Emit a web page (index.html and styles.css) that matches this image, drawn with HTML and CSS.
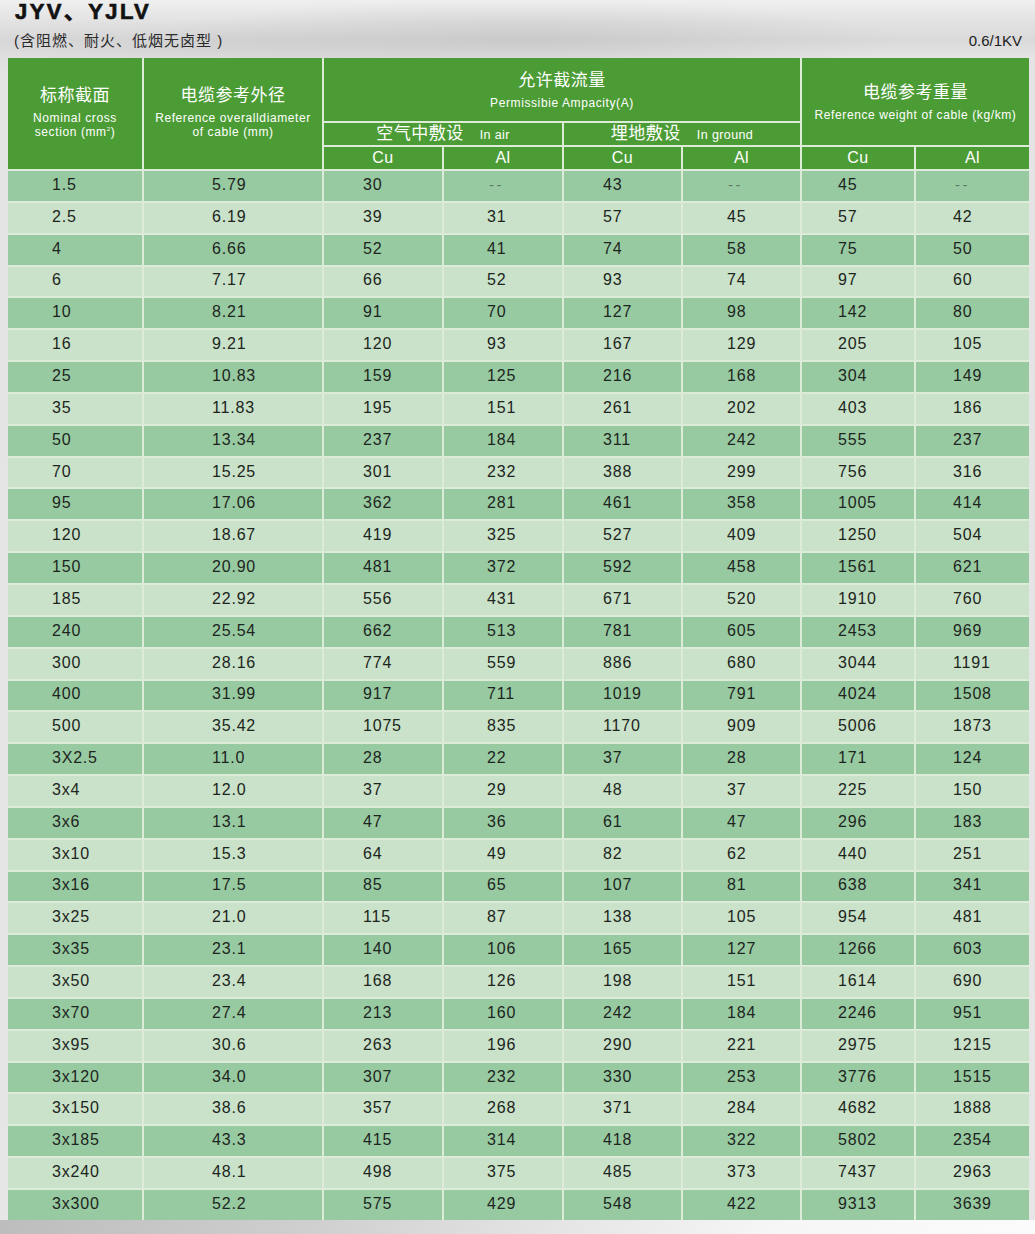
FILE: index.html
```html
<!DOCTYPE html>
<html lang="zh">
<head>
<meta charset="utf-8">
<title>JYV、YJLV</title>
<link rel="stylesheet" href="styles.css">
</head>
<body>
<div class="page">
  <h1 class="title">JYV、YJLV</h1>
  <div class="subline">
    <span class="subtitle">(含阻燃、耐火、低烟无卤型 )</span>
    <span class="volt">0.6/1KV</span>
  </div>
  <div class="grid">
    <div class="h h-sec"><div class="zh">标称截面</div><div class="en">Nominal cross<br>section (mm<sup>2</sup>)</div></div>
    <div class="h h-dia"><div class="zh">电缆参考外径</div><div class="en">Reference overalldiameter<br>of cable (mm)</div></div>
    <div class="h h-amp"><div class="zh">允许截流量</div><div class="en">Permissibie Ampacity(A)</div></div>
    <div class="h h-wt"><div class="zh">电缆参考重量</div><div class="en">Reference weight of cable (kg/km)</div></div>
    <div class="h h-air"><span class="zh">空气中敷设</span><span class="en-s">In air</span></div>
    <div class="h h-gnd"><span class="zh">埋地敷设</span><span class="en-s">In ground</span></div>
    <div class="h h-m c3">Cu</div>
    <div class="h h-m c4">Al</div>
    <div class="h h-m c5">Cu</div>
    <div class="h h-m c6">Al</div>
    <div class="h h-m c7">Cu</div>
    <div class="h h-m c8">Al</div>

    <div class="row dk"><div>1.5</div><div>5.79</div><div>30</div><div class="na">--</div><div>43</div><div class="na">--</div><div>45</div><div class="na">--</div></div>
    <div class="row lt"><div>2.5</div><div>6.19</div><div>39</div><div>31</div><div>57</div><div>45</div><div>57</div><div>42</div></div>
    <div class="row dk"><div>4</div><div>6.66</div><div>52</div><div>41</div><div>74</div><div>58</div><div>75</div><div>50</div></div>
    <div class="row lt"><div>6</div><div>7.17</div><div>66</div><div>52</div><div>93</div><div>74</div><div>97</div><div>60</div></div>
    <div class="row dk"><div>10</div><div>8.21</div><div>91</div><div>70</div><div>127</div><div>98</div><div>142</div><div>80</div></div>
    <div class="row lt"><div>16</div><div>9.21</div><div>120</div><div>93</div><div>167</div><div>129</div><div>205</div><div>105</div></div>
    <div class="row dk"><div>25</div><div>10.83</div><div>159</div><div>125</div><div>216</div><div>168</div><div>304</div><div>149</div></div>
    <div class="row lt"><div>35</div><div>11.83</div><div>195</div><div>151</div><div>261</div><div>202</div><div>403</div><div>186</div></div>
    <div class="row dk"><div>50</div><div>13.34</div><div>237</div><div>184</div><div>311</div><div>242</div><div>555</div><div>237</div></div>
    <div class="row lt"><div>70</div><div>15.25</div><div>301</div><div>232</div><div>388</div><div>299</div><div>756</div><div>316</div></div>
    <div class="row dk"><div>95</div><div>17.06</div><div>362</div><div>281</div><div>461</div><div>358</div><div>1005</div><div>414</div></div>
    <div class="row lt"><div>120</div><div>18.67</div><div>419</div><div>325</div><div>527</div><div>409</div><div>1250</div><div>504</div></div>
    <div class="row dk"><div>150</div><div>20.90</div><div>481</div><div>372</div><div>592</div><div>458</div><div>1561</div><div>621</div></div>
    <div class="row lt"><div>185</div><div>22.92</div><div>556</div><div>431</div><div>671</div><div>520</div><div>1910</div><div>760</div></div>
    <div class="row dk"><div>240</div><div>25.54</div><div>662</div><div>513</div><div>781</div><div>605</div><div>2453</div><div>969</div></div>
    <div class="row lt"><div>300</div><div>28.16</div><div>774</div><div>559</div><div>886</div><div>680</div><div>3044</div><div>1191</div></div>
    <div class="row dk"><div>400</div><div>31.99</div><div>917</div><div>711</div><div>1019</div><div>791</div><div>4024</div><div>1508</div></div>
    <div class="row lt"><div>500</div><div>35.42</div><div>1075</div><div>835</div><div>1170</div><div>909</div><div>5006</div><div>1873</div></div>
    <div class="row dk"><div>3X2.5</div><div>11.0</div><div>28</div><div>22</div><div>37</div><div>28</div><div>171</div><div>124</div></div>
    <div class="row lt"><div>3x4</div><div>12.0</div><div>37</div><div>29</div><div>48</div><div>37</div><div>225</div><div>150</div></div>
    <div class="row dk"><div>3x6</div><div>13.1</div><div>47</div><div>36</div><div>61</div><div>47</div><div>296</div><div>183</div></div>
    <div class="row lt"><div>3x10</div><div>15.3</div><div>64</div><div>49</div><div>82</div><div>62</div><div>440</div><div>251</div></div>
    <div class="row dk"><div>3x16</div><div>17.5</div><div>85</div><div>65</div><div>107</div><div>81</div><div>638</div><div>341</div></div>
    <div class="row lt"><div>3x25</div><div>21.0</div><div>115</div><div>87</div><div>138</div><div>105</div><div>954</div><div>481</div></div>
    <div class="row dk"><div>3x35</div><div>23.1</div><div>140</div><div>106</div><div>165</div><div>127</div><div>1266</div><div>603</div></div>
    <div class="row lt"><div>3x50</div><div>23.4</div><div>168</div><div>126</div><div>198</div><div>151</div><div>1614</div><div>690</div></div>
    <div class="row dk"><div>3x70</div><div>27.4</div><div>213</div><div>160</div><div>242</div><div>184</div><div>2246</div><div>951</div></div>
    <div class="row lt"><div>3x95</div><div>30.6</div><div>263</div><div>196</div><div>290</div><div>221</div><div>2975</div><div>1215</div></div>
    <div class="row dk"><div>3x120</div><div>34.0</div><div>307</div><div>232</div><div>330</div><div>253</div><div>3776</div><div>1515</div></div>
    <div class="row lt"><div>3x150</div><div>38.6</div><div>357</div><div>268</div><div>371</div><div>284</div><div>4682</div><div>1888</div></div>
    <div class="row dk"><div>3x185</div><div>43.3</div><div>415</div><div>314</div><div>418</div><div>322</div><div>5802</div><div>2354</div></div>
    <div class="row lt"><div>3x240</div><div>48.1</div><div>498</div><div>375</div><div>485</div><div>373</div><div>7437</div><div>2963</div></div>
    <div class="row dk"><div>3x300</div><div>52.2</div><div>575</div><div>429</div><div>548</div><div>422</div><div>9313</div><div>3639</div></div>
  </div>
  <div class="foot"></div>
</div>
</body>
</html>
```

FILE: styles.css
```css
html, body {
  margin: 0;
  padding: 0;
}

body {
  font-family: "Liberation Sans", Arial, "Noto Sans CJK SC", sans-serif;
  background: linear-gradient(to bottom, #efefef 0, #e2e2e2 22px, #dadada 40px, #e4e4e4 58px, #e6e6e6 100%);
  color: #1e2620;
}

.page {
  width: 1035px;
  height: 1234px;
  overflow: hidden;
  background:
    radial-gradient(ellipse 380px 40px at 520px 40px, rgba(170,170,170,0.35), rgba(170,170,170,0) 100%),
    radial-gradient(ellipse 300px 30px at 180px 50px, rgba(190,190,190,0.3), rgba(190,190,190,0) 100%);
}

.title {
  margin: 0;
  padding-left: 15px;
  height: 24px;
  font-family: "Liberation Sans", Arial, "Noto Sans CJK SC", sans-serif;
  font-weight: bold;
  font-size: 22px;
  line-height: 24px;
  letter-spacing: 2.4px;
  color: #121212;
  -webkit-text-stroke: 0.7px #121212;
}

.subline {
  margin-top: 7px;
  height: 20px;
  display: flex;
  justify-content: space-between;
  align-items: baseline;
  padding: 0 13px 0 14px;
  line-height: 20px;
}

.subtitle {
  font-size: 15px;
  letter-spacing: 1px;
  color: #2a2a2a;
  font-family: "Liberation Sans", Arial, "Noto Sans CJK SC", sans-serif;
}

.volt {
  font-size: 15px;
  color: #1c1c1c;
}

.grid {
  margin-top: 7px;
  margin-left: 8px;
  width: 1021px;
  display: grid;
  grid-template-columns: 134px 178px 118px 118px 117px 117px 112px 113px;
  grid-template-rows: 63px 22px 22px repeat(33, 29.85px);
  gap: 2px;
  background: #dcecd8;
}

.h {
  background: #4c9c35;
  color: #ffffff;
  display: flex;
  flex-direction: column;
  align-items: center;
  justify-content: center;
  text-align: center;
}

.h .zh {
  font-size: 17px;
  line-height: 22px;
  letter-spacing: 0.5px;
  font-family: "Liberation Sans", "Noto Sans CJK SC", sans-serif;
}

.h .en {
  margin-top: 4px;
  font-size: 12px;
  line-height: 14px;
  letter-spacing: 0.6px;
}

.h sup {
  font-size: 6px;
  vertical-align: 5px;
  line-height: 0;
}

.h-sec { grid-column: 1; grid-row: 1 / 4; padding-bottom: 4px; }
.h-dia { grid-column: 2; grid-row: 1 / 4; padding-bottom: 4px; }
.h-amp { grid-column: 3 / 7; grid-row: 1; }
.h-wt  { grid-column: 7 / 9; grid-row: 1 / 3; }

.h-air, .h-gnd {
  flex-direction: row;
  align-items: baseline;
  line-height: 22px;
}
.h-air { grid-column: 3 / 5; grid-row: 2; }
.h-gnd { grid-column: 5 / 7; grid-row: 2; }

.en-s {
  font-size: 12.5px;
  letter-spacing: 0.4px;
  margin-left: 16px;
}

.h-m {
  grid-row: 3;
  font-size: 16px;
  letter-spacing: 0.5px;
  line-height: 22px;
}
.c3 { grid-column: 3; }
.c4 { grid-column: 4; }
.c5 { grid-column: 5; }
.c6 { grid-column: 6; }
.c7 { grid-column: 7; }
.c8 { grid-column: 8; }

.row {
  display: contents;
}

.row > div {
  display: flex;
  align-items: center;
  padding-bottom: 2px;
  box-sizing: border-box;
  font-size: 16px;
  letter-spacing: 0.8px;
  color: #1d2520;
  white-space: nowrap;
}

.row.dk > div { background: #98caa2; }
.row.lt > div { background: #c9e2c9; }

.row > div:nth-child(1) { padding-left: 44px; }
.row > div:nth-child(2) { padding-left: 68px; }
.row > div:nth-child(3) { padding-left: 39px; }
.row > div:nth-child(4) { padding-left: 43px; }
.row > div:nth-child(5) { padding-left: 39px; }
.row > div:nth-child(6) { padding-left: 44px; }
.row > div:nth-child(7) { padding-left: 36px; }
.row > div:nth-child(8) { padding-left: 37px; }

.row > div.na {
  color: #587c60;
  letter-spacing: 2.5px;
  font-size: 15px;
  padding-left: 45px;
}
.row > div.na:nth-child(8) { padding-left: 39px; }

.foot {
  height: 14px;
  background: linear-gradient(to right, #bdbdbd 0, #cfcfcf 30%, #e6e6e6 55%, #f6f6f6 75%, #fbfbfb 100%);
}
```
